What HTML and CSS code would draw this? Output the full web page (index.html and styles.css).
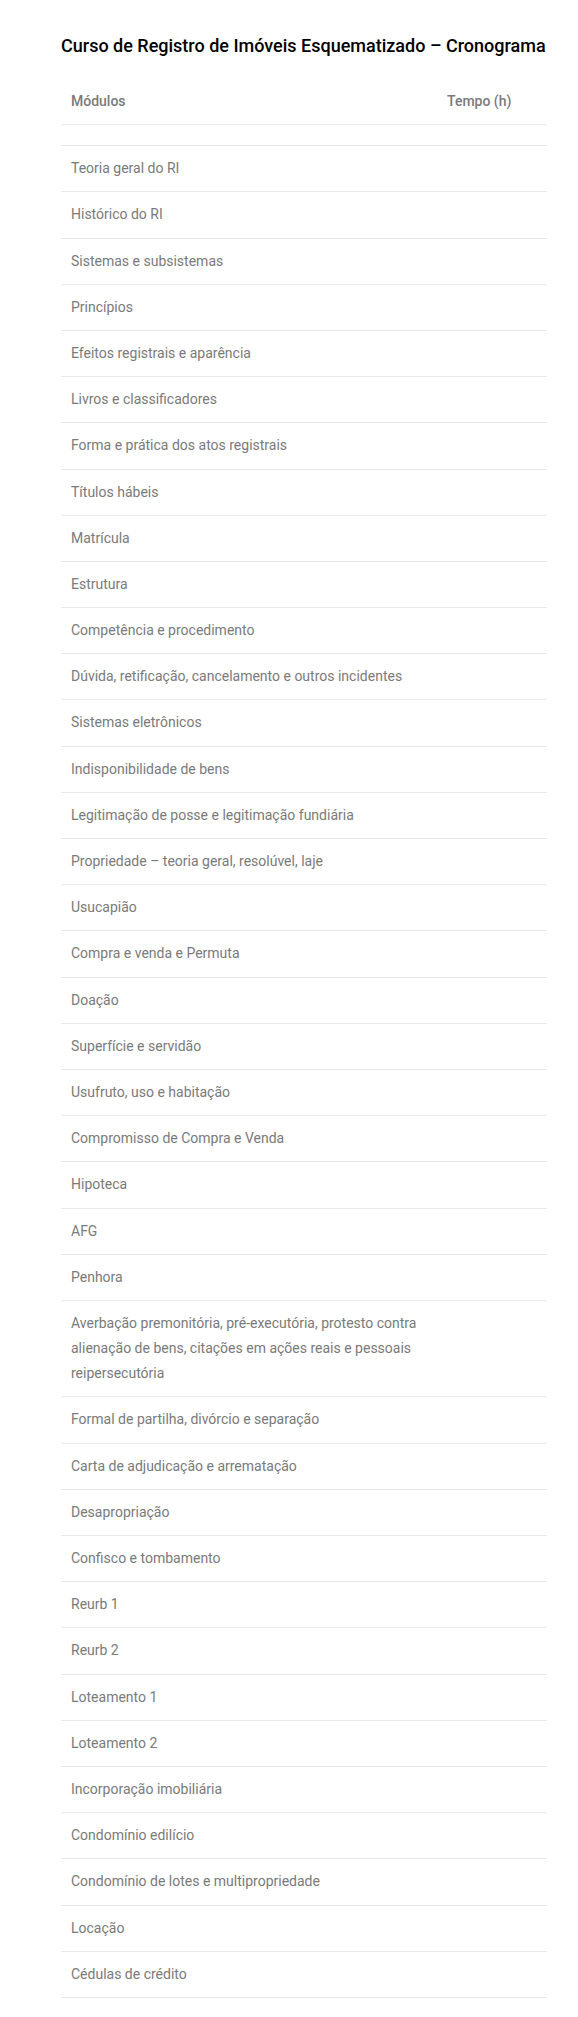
FILE: index.html
```html
<!DOCTYPE html>
<html lang="pt-BR">
<head>
  <meta charset="UTF-8">
  <meta name="viewport" content="width=device-width, initial-scale=1.0">
  <title>Cronograma</title>
  <link rel="stylesheet" href="styles.css">
</head>
<body>
  <div class="wrap">
    <h2 class="title">Curso de Registro de Imóveis Esquematizado – Cronograma</h2>

    <table class="schedule">
      <thead>
        <tr>
          <th>Módulos</th>
          <th class="time">Tempo (h)</th>
        </tr>
      </thead>
      <tbody>
        <tr><td></td><td></td></tr>
        <tr><td>Teoria geral do RI</td><td></td></tr>
        <tr><td>Histórico do RI</td><td></td></tr>
        <tr><td>Sistemas e subsistemas</td><td></td></tr>
        <tr><td>Princípios</td><td></td></tr>
        <tr><td>Efeitos registrais e aparência</td><td></td></tr>
        <tr><td>Livros e classificadores</td><td></td></tr>
        <tr><td>Forma e prática dos atos registrais</td><td></td></tr>
        <tr><td>Títulos hábeis</td><td></td></tr>
        <tr><td>Matrícula</td><td></td></tr>
        <tr><td>Estrutura</td><td></td></tr>
        <tr><td>Competência e procedimento</td><td></td></tr>
        <tr><td>Dúvida, retificação, cancelamento e outros incidentes</td><td></td></tr>
        <tr><td>Sistemas eletrônicos</td><td></td></tr>
        <tr><td>Indisponibilidade de bens</td><td></td></tr>
        <tr><td>Legitimação de posse e legitimação fundiária</td><td></td></tr>
        <tr><td>Propriedade – teoria geral, resolúvel, laje</td><td></td></tr>
        <tr><td>Usucapião</td><td></td></tr>
        <tr><td>Compra e venda e Permuta</td><td></td></tr>
        <tr><td>Doação</td><td></td></tr>
        <tr><td>Superfície e servidão</td><td></td></tr>
        <tr><td>Usufruto, uso e habitação</td><td></td></tr>
        <tr><td>Compromisso de Compra e Venda</td><td></td></tr>
        <tr><td>Hipoteca</td><td></td></tr>
        <tr><td>AFG</td><td></td></tr>
        <tr><td>Penhora</td><td></td></tr>
        <tr><td>Averbação premonitória, pré-executória, protesto contra alienação de bens, citações em ações reais e pessoais reipersecutória</td><td></td></tr>
        <tr><td>Formal de partilha, divórcio e separação</td><td></td></tr>
        <tr><td>Carta de adjudicação e arrematação</td><td></td></tr>
        <tr><td>Desapropriação</td><td></td></tr>
        <tr><td>Confisco e tombamento</td><td></td></tr>
        <tr><td>Reurb 1</td><td></td></tr>
        <tr><td>Reurb 2</td><td></td></tr>
        <tr><td>Loteamento 1</td><td></td></tr>
        <tr><td>Loteamento 2</td><td></td></tr>
        <tr><td>Incorporação imobiliária</td><td></td></tr>
        <tr><td>Condomínio edilício</td><td></td></tr>
        <tr><td>Condomínio de lotes e multipropriedade</td><td></td></tr>
        <tr><td>Locação</td><td></td></tr>
        <tr><td>Cédulas de crédito</td><td></td></tr>
      </tbody>
    </table>
  </div>
</body>
</html>
```

FILE: styles.css
```css
body {
  margin: 0;
  font-family: Roboto, "Liberation Sans", sans-serif;
  background-color: #fff;
  color: #7a7a7a;
}

.wrap {
  width: 486px;
  margin-left: 61px;
  padding-top: 33px;
}

.title {
  margin: 0 0 20px;
  font-size: 18px;
  font-weight: 500;
  line-height: 26px;
  color: #000;
  white-space: nowrap;
}

.schedule {
  width: 100%;
  border-collapse: collapse;
  font-size: 14px;
  line-height: 1.8;
}

.schedule th,
.schedule td {
  padding: 10px;
  text-align: left;
  vertical-align: top;
  border-bottom: 1px solid #e8e8e8;
}

.schedule th {
  font-weight: 500;
  color: #7a7a7a;
}

.schedule .time {
  width: 90px;
}

.schedule td {
  font-weight: 400;
  color: #7a7a7a;
}
```
